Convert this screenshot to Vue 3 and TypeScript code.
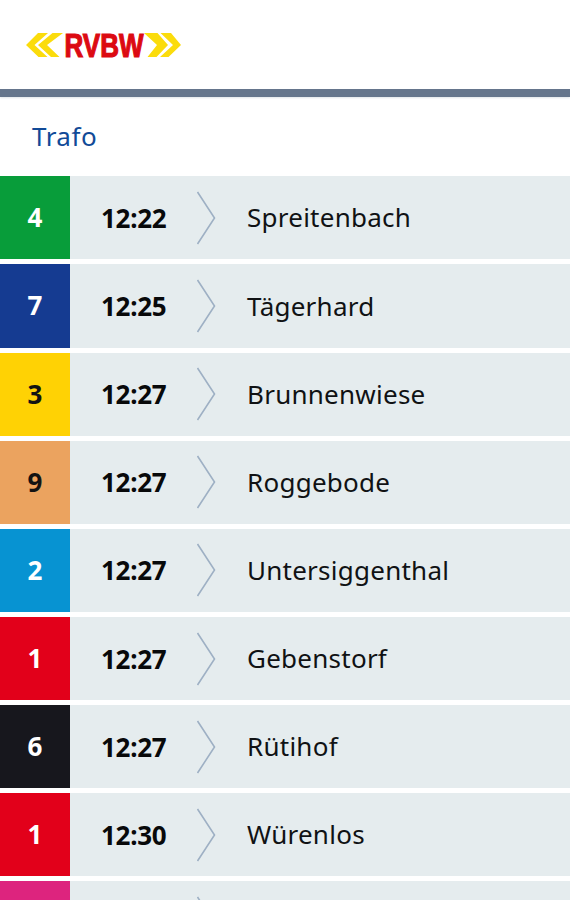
<script setup lang="ts">
interface Departure {
  line: string
  tone: string
  time: string
  destination: string
}

const stop = 'Trafo'

const departures: Departure[] = [
  { line: '4', tone: 'green', time: '12:22', destination: 'Spreitenbach' },
  { line: '7', tone: 'blue', time: '12:25', destination: 'Tägerhard' },
  { line: '3', tone: 'yellow', time: '12:27', destination: 'Brunnenwiese' },
  { line: '9', tone: 'orange', time: '12:27', destination: 'Roggebode' },
  { line: '2', tone: 'sky', time: '12:27', destination: 'Untersiggenthal' },
  { line: '1', tone: 'red', time: '12:27', destination: 'Gebenstorf' },
  { line: '6', tone: 'black', time: '12:27', destination: 'Rütihof' },
  { line: '1', tone: 'red', time: '12:30', destination: 'Würenlos' },
  { line: '', tone: 'pink', time: '', destination: '' },
]
</script>

<template>
  <main class="screen">
    <header class="header">
      <svg class="logo" width="156" height="50" viewBox="0 -10 156 50" role="img" aria-label="RVBW">
        <g class="logo-arrows">
          <path d="M0 14 12 2H22L8.500 14 21.500 26H12.500Z" />
          <path d="M12 14 26.500 2H37L21 14 33.500 26H25Z" />
          <path d="M155 14 145 2H134.500L147 14 134 26H142.500Z" />
          <path d="M142 14 131.500 2H118L131 14 121.500 26H130.500Z" />
        </g>
        <text class="logo-text" x="38.500" y="25.500" textLength="79" lengthAdjust="spacingAndGlyphs">RVBW</text>
      </svg>
    </header>
    <h1 class="stop">{{ stop }}</h1>
    <ul class="list">
      <li v-for="(d, i) in departures" :key="i" class="row">
        <span class="line" :class="d.tone">{{ d.line }}</span>
        <span class="time">{{ d.time }}</span>
        <svg class="chevron" width="20" height="54" viewBox="0 0 20 54">
          <path d="M1.500 1 18.500 27 1.500 53" />
        </svg>
        <span class="destination">{{ d.destination }}</span>
      </li>
    </ul>
  </main>
</template>

<style>
body {
  background: #fff;
}
</style>

<style scoped>
.screen {
  box-sizing: border-box;
  width: 570px;
  height: 900px;
  overflow: hidden;
  background: #fff;
  font-family: "Noto Sans", "Open Sans", sans-serif;
  font-size: 26px;
  color: #101214;
}

.header {
  box-sizing: border-box;
  height: 97px;
  padding: 21px 0 0 26px;
  border-bottom: 8px solid #65758c;
  box-shadow: 0 1px 2px #dfe3e8;
}

.logo {
  display: block;
}

.logo-arrows {
  fill: #fbdc0c;
}

.logo-text {
  fill: #dc0a12;
  stroke: #dc0a12;
  stroke-width: 1.200;
  font-family: "Liberation Sans", Arial, sans-serif;
  font-size: 33px;
  font-weight: 700;
}

.stop {
  height: 79.300px;
  margin: 0;
  padding-left: 32px;
  font-size: 26px;
  font-weight: 400;
  line-height: 78px;
  letter-spacing: 0.500px;
  color: #114a97;
}

.list {
  display: flex;
  flex-direction: column;
  gap: 5px;
  margin: 0;
  padding: 0;
  list-style: none;
}

.row {
  display: flex;
  align-items: center;
  flex: none;
  height: 83.150px;
  background: #e5ecee;
  white-space: nowrap;
}

.line {
  width: 70px;
  height: 100%;
  line-height: 83.150px;
  text-align: center;
  font-weight: 700;
  color: #fff;
}

.time {
  width: 95px;
  padding-left: 31px;
  font-weight: 700;
  letter-spacing: -0.300px;
  color: #08090a;
}

.chevron {
  display: block;
  flex: none;
  fill: none;
  stroke: #9eb0c4;
  stroke-width: 1.600;
}

.destination {
  padding: 0 0 1px 31px;
  letter-spacing: 0.250px;
}

.green { background: #089d3a; }
.blue { background: #153b91; }
.yellow { background: #ffd204; color: #131313; }
.orange { background: #eba35f; color: #131313; }
.sky { background: #0793d2; }
.red { background: #e2001a; }
.black { background: #17171d; }
.pink { background: #dd247e; }
</style>
